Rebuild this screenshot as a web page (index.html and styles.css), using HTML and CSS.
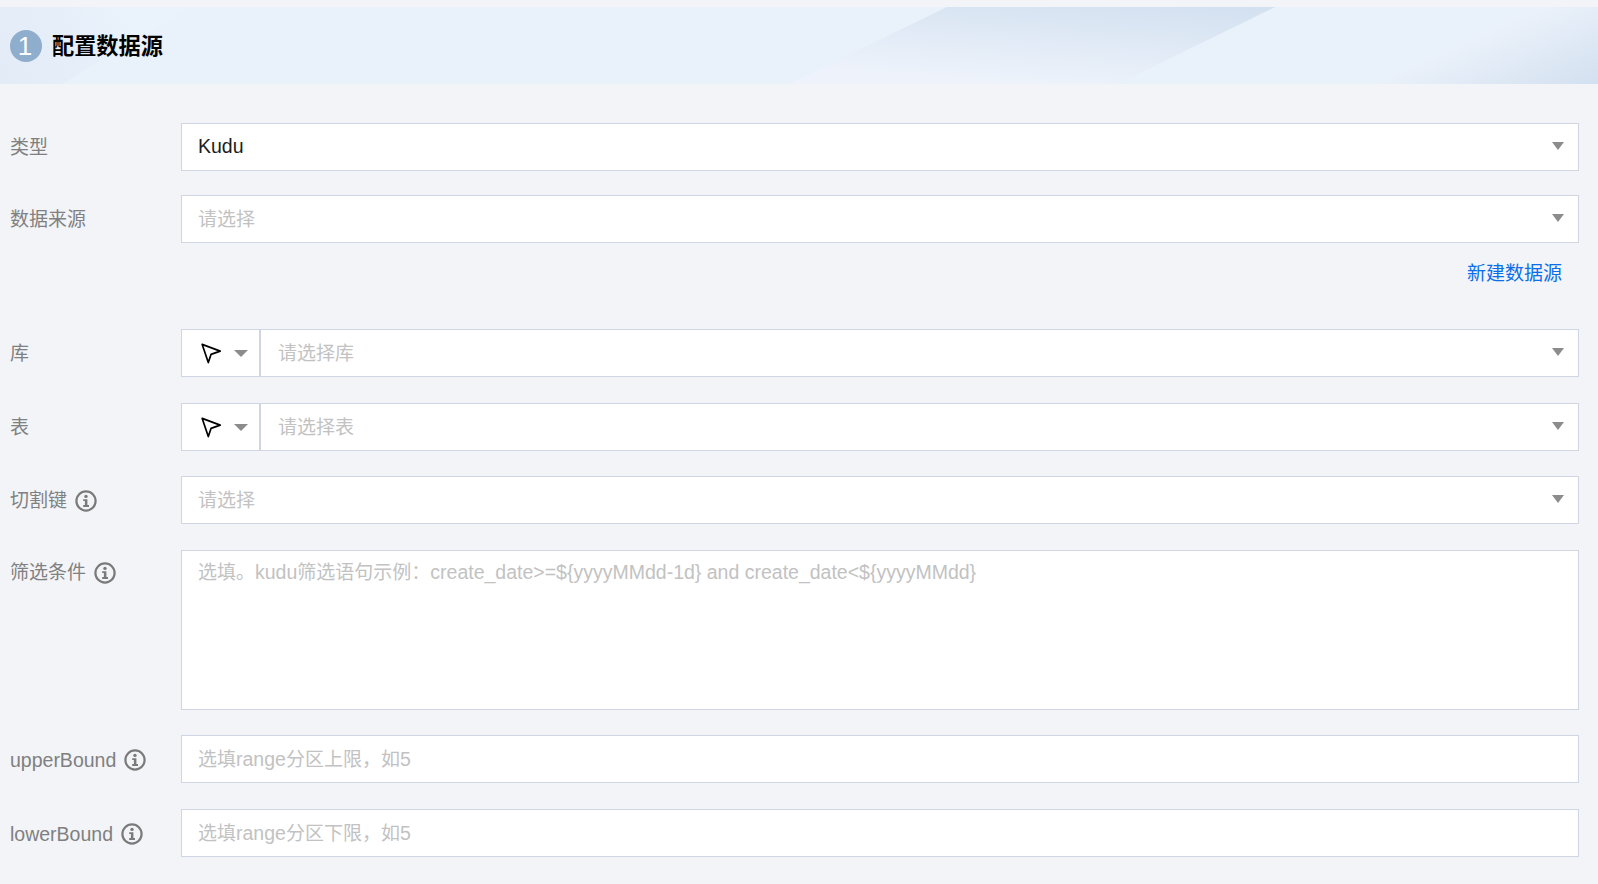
FILE: index.html
```html
<!DOCTYPE html>
<html lang="zh-CN">
<head>
<meta charset="utf-8">
<title>配置数据源</title>
<link rel="stylesheet" href="styles.css">
</head>
<body>
<svg class="icon-defs" width="0" height="0" aria-hidden="true">
  <defs>
    <symbol id="info" viewBox="0 0 22 22">
      <circle cx="11" cy="11" r="9.6" fill="none" stroke="currentColor" stroke-width="2.2"/>
      <circle cx="11" cy="6.4" r="1.7" fill="currentColor"/>
      <path d="M8.2 9.2H12.4V15H14V16.9H8.2V15H9.9V11.1H8.2Z" fill="currentColor"/>
    </symbol>
    <symbol id="pointer" viewBox="0 0 22 22">
      <path d="M2.2 2.4L20.2 9.1L11 12.4L8.3 20.6Z" fill="#fff" stroke="#000" stroke-width="1.7" stroke-linejoin="round"/>
    </symbol>
  </defs>
</svg>
<main class="page">
  <header class="section-head">
    <svg class="head-bg" viewBox="0 0 1598 77" preserveAspectRatio="none" aria-hidden="true">
      <defs>
        <linearGradient id="band" x1="1275" y1="0" x2="1268" y2="96" gradientUnits="userSpaceOnUse">
          <stop offset="0" stop-color="#d2e0f0"/>
          <stop offset="1" stop-color="#eef3fb"/>
        </linearGradient>
        <linearGradient id="corner" x1="1598" y1="77" x2="1558" y2="-16" gradientUnits="userSpaceOnUse">
          <stop offset="0" stop-color="#d3e0f0"/>
          <stop offset="1" stop-color="#edf3fb"/>
        </linearGradient>
        <linearGradient id="left" x1="0" y1="77" x2="130" y2="0" gradientUnits="userSpaceOnUse">
          <stop offset="0" stop-color="#e2ebf6"/>
          <stop offset="1" stop-color="#eaf2fc"/>
        </linearGradient>
      </defs>
      <path d="M0 0H190L62 77H0Z" fill="url(#left)"/>
      <path d="M947 0H1275L1118 77H789Z" fill="url(#band)"/>
      <path d="M1536 0H1598V77H1379Z" fill="url(#corner)"/>
    </svg>
    <span class="step">1</span>
    <h2 class="section-title">配置数据源</h2>
  </header>

  <form class="form">
    <div class="row row-tight">
      <label class="label">类型</label>
      <div class="control select"><span class="value latin">Kudu</span><i class="caret"></i></div>
    </div>
    <div class="row row-none">
      <label class="label">数据来源</label>
      <div class="control select"><span class="placeholder">请选择</span><i class="caret"></i></div>
    </div>
    <div class="row row-link">
      <span></span>
      <a class="link" href="#">新建数据源</a>
    </div>
    <div class="row">
      <label class="label">库</label>
      <div class="control group">
        <div class="prefix"><svg class="pointer"><use href="#pointer"/></svg><i class="caret caret-prefix"></i></div>
        <div class="select group-main"><span class="placeholder">请选择库</span><i class="caret"></i></div>
      </div>
    </div>
    <div class="row row-mid">
      <label class="label">表</label>
      <div class="control group">
        <div class="prefix"><svg class="pointer"><use href="#pointer"/></svg><i class="caret caret-prefix"></i></div>
        <div class="select group-main"><span class="placeholder">请选择表</span><i class="caret"></i></div>
      </div>
    </div>
    <div class="row">
      <label class="label">切割键<svg class="info"><use href="#info"/></svg></label>
      <div class="control select"><span class="placeholder">请选择</span><i class="caret"></i></div>
    </div>
    <div class="row row-top">
      <label class="label">筛选条件<svg class="info"><use href="#info"/></svg></label>
      <div class="control textarea"><span class="placeholder">选填。<span class="latin">kudu</span>筛选语句示例：<span class="latin">create_date&gt;=${yyyyMMdd-1d} and create_date&lt;${yyyyMMdd}</span></span></div>
    </div>
    <div class="row">
      <label class="label"><span class="latin">upperBound</span><svg class="info"><use href="#info"/></svg></label>
      <div class="control"><span class="placeholder">选填<span class="latin">range</span>分区上限，如<span class="latin">5</span></span></div>
    </div>
    <div class="row">
      <label class="label"><span class="latin">lowerBound</span><svg class="info"><use href="#info"/></svg></label>
      <div class="control"><span class="placeholder">选填<span class="latin">range</span>分区下限，如<span class="latin">5</span></span></div>
    </div>
  </form>
</main>
</body>
</html>
```

FILE: styles.css
```css
* {
  box-sizing: border-box;
}

html,
body {
  margin: 0;
  height: 100%;
  overflow: hidden;
  background: #f2f4f8;
}

body {
  font-family: "Liberation Sans", "Noto Sans CJK SC", sans-serif;
  font-size: 19px;
  color: #222;
}

.latin {
  font-size: 19.5px;
}

.icon-defs {
  position: absolute;
}

.page {
  padding-top: 7px;
}

.section-head {
  position: relative;
  display: flex;
  align-items: center;
  gap: 10px;
  height: 77px;
  padding: 1px 0 0 10px;
  background: #e9f1fb;
  overflow: hidden;
}

.head-bg {
  position: absolute;
  inset: 0;
  width: 100%;
  height: 100%;
}

.step {
  position: relative;
  display: flex;
  align-items: center;
  justify-content: center;
  width: 32px;
  height: 32px;
  padding-right: 2px;
  border-radius: 50%;
  background: #8fadcc;
  color: #fff;
  font-size: 26px;
}

.section-title {
  position: relative;
  margin: -4px 0 0;
  font-size: 22.2px;
  font-weight: 700;
  color: #000;
}

.form {
  padding: 39px 19px 0 10px;
}

.row {
  display: grid;
  grid-template-columns: 171px 1fr;
  align-items: center;
  margin-bottom: 26px;
}

.row-tight {
  margin-bottom: 24px;
}

.row-none {
  margin-bottom: 0;
}

.row-mid {
  margin-bottom: 25px;
}

.row-top {
  align-items: start;
  margin-bottom: 25px;
}

.row-link {
  height: 86px;
  margin-bottom: 0;
  align-items: start;
  justify-items: end;
}

.label {
  display: flex;
  align-items: center;
  gap: 8px;
  padding-top: 1px;
  color: #808080;
  line-height: 22px;
}

.row-top .label {
  padding-top: 12px;
}

.info {
  width: 22px;
  height: 22px;
  color: #7a7a7a;
}

.control {
  display: flex;
  align-items: center;
  height: 48px;
  padding: 0 16px;
  background: #fff;
  border: 1px solid #cfd5e2;
}

.select {
  display: flex;
  align-items: center;
  justify-content: space-between;
}

.placeholder {
  margin-top: -4px;
  color: #c2c2c2;
}

.value {
  margin-top: -1px;
  color: #1c1c1c;
}

.caret {
  display: block;
  width: 0;
  height: 0;
  margin-top: -2px;
  margin-right: -2px;
  border-style: solid;
  border-width: 8px 6.5px 0;
  border-color: #8c8c8c transparent transparent;
}

.caret-prefix {
  margin: 0 0 0 12px;
  border-width: 7px 7px 0;
}

.group {
  padding: 0;
}

.prefix {
  display: flex;
  align-items: center;
  flex: none;
  width: 79px;
  height: 100%;
  padding-left: 18px;
  border-right: 2px solid #cfd5e2;
}

.pointer {
  width: 22px;
  height: 22px;
  margin-top: -1px;
}

.group-main {
  flex: 1;
  height: 100%;
  padding: 0 16px 0 17px;
}

.textarea {
  align-items: flex-start;
  height: 160px;
  padding-top: 10px;
}

.link {
  margin: 18px 17px 0 0;
  color: #0a6ee8;
  text-decoration: none;
  line-height: 26px;
}
```
